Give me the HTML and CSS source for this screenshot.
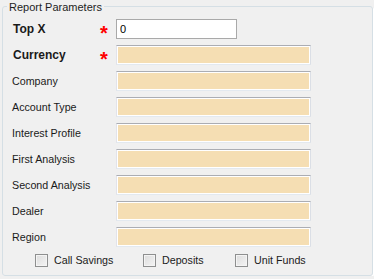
FILE: index.html
```html
<!DOCTYPE html>
<html>
<head lang="en">
    <meta charset="UTF-8">
    <title>Report Parameters</title>
    <link rel="stylesheet" href="styles.css">
</head>
<body>
<div class="group-box">
    <div class="group-title">Report Parameters</div>
    <div class="param-list">
        <div class="param-row">
            <label class="param-label required">Top X</label>
            <span class="param-star">*</span>
            <input type="text" class="param-input short" value="0">
        </div>
        <div class="param-row">
            <label class="param-label required">Currency</label>
            <span class="param-star">*</span>
            <div class="param-input lookup"></div>
        </div>
        <div class="param-row">
            <label class="param-label">Company</label>
            <span class="param-star"></span>
            <div class="param-input lookup"></div>
        </div>
        <div class="param-row">
            <label class="param-label">Account Type</label>
            <span class="param-star"></span>
            <div class="param-input lookup"></div>
        </div>
        <div class="param-row">
            <label class="param-label">Interest Profile</label>
            <span class="param-star"></span>
            <div class="param-input lookup"></div>
        </div>
        <div class="param-row">
            <label class="param-label">First Analysis</label>
            <span class="param-star"></span>
            <div class="param-input lookup"></div>
        </div>
        <div class="param-row">
            <label class="param-label">Second Analysis</label>
            <span class="param-star"></span>
            <div class="param-input lookup"></div>
        </div>
        <div class="param-row">
            <label class="param-label">Dealer</label>
            <span class="param-star"></span>
            <div class="param-input lookup"></div>
        </div>
        <div class="param-row">
            <label class="param-label">Region</label>
            <span class="param-star"></span>
            <div class="param-input lookup"></div>
        </div>
    </div>
    <div class="check-row">
        <label class="check-item"><span class="check-box"></span>Call Savings</label>
        <label class="check-item"><span class="check-box"></span>Deposits</label>
        <label class="check-item"><span class="check-box"></span>Unit Funds</label>
    </div>
</div>
</body>
</html>
```

FILE: styles.css
```css
body {
    margin: 0px;
    background: #f0f0f0;
    font-family: "Liberation Sans", Arial, sans-serif;
    font-size: 11px;
    color: #1a1a1a;
}
.group-box {
    margin: 6px 1px 0px 2px;
    padding: 0px 0px 8px 9px;
    border: 1px solid #d5dfe5;
    border-radius: 3px;
    box-shadow: 1px 1px 0px #ffffff;
}
.group-title {
    width: fit-content;
    margin: -7px 0px 5px -5px;
    padding: 0px 2px;
    line-height: 14px;
    height: 14px;
    font-size: 11px;
    color: #1e1e1e;
    background: #f0f0f0;
}
.param-list {
    display: grid;
    row-gap: 6px;
}
.param-row {
    display: grid;
    grid-template-columns: 88px 16px 195px;
    align-items: center;
    height: 20px;
}
.param-label {
    white-space: nowrap;
    font-size: 10.7px;
}
.param-label.required {
    font-weight: bold;
    font-size: 12px;
    padding-left: 1px;
}
.param-star {
    align-self: start;
    color: #ff0000;
    font-weight: bold;
    font-size: 20px;
    line-height: 28px;
    height: 20px;
}
.param-input {
    box-sizing: border-box;
    height: 20px;
    margin: 0px;
}
.param-input.short {
    width: 121px;
    border: 1px solid #a9a9a9;
    background: #ffffff;
    padding: 0px 3px;
    font-family: "Liberation Sans", Arial, sans-serif;
    font-size: 11px;
    color: #000000;
    outline: none;
}
.param-input.lookup {
    width: 195px;
    border: 1px solid #abadb3;
    border-left-color: #e2e3ea;
    border-right-color: #dbdfe6;
    border-bottom-color: #e3e9ef;
    background: #f5deb3;
    box-shadow: inset 0px 0px 0px 1px #ffffff;
}
.check-row {
    display: grid;
    grid-template-columns: 108px 92px auto;
    margin: 7px 0px 0px 23px;
    height: 13px;
}
.check-item {
    display: flex;
    align-items: center;
    gap: 6px;
    line-height: 13px;
    font-size: 10.7px;
}
.check-box {
    width: 13px;
    height: 13px;
    box-sizing: border-box;
    border: 1px solid #8e8f8f;
    background: linear-gradient(135deg, #dcdcdc 0%, #f4f4f4 100%);
    box-shadow: inset 0px 0px 0px 1px #f4f4f4;
}
```
